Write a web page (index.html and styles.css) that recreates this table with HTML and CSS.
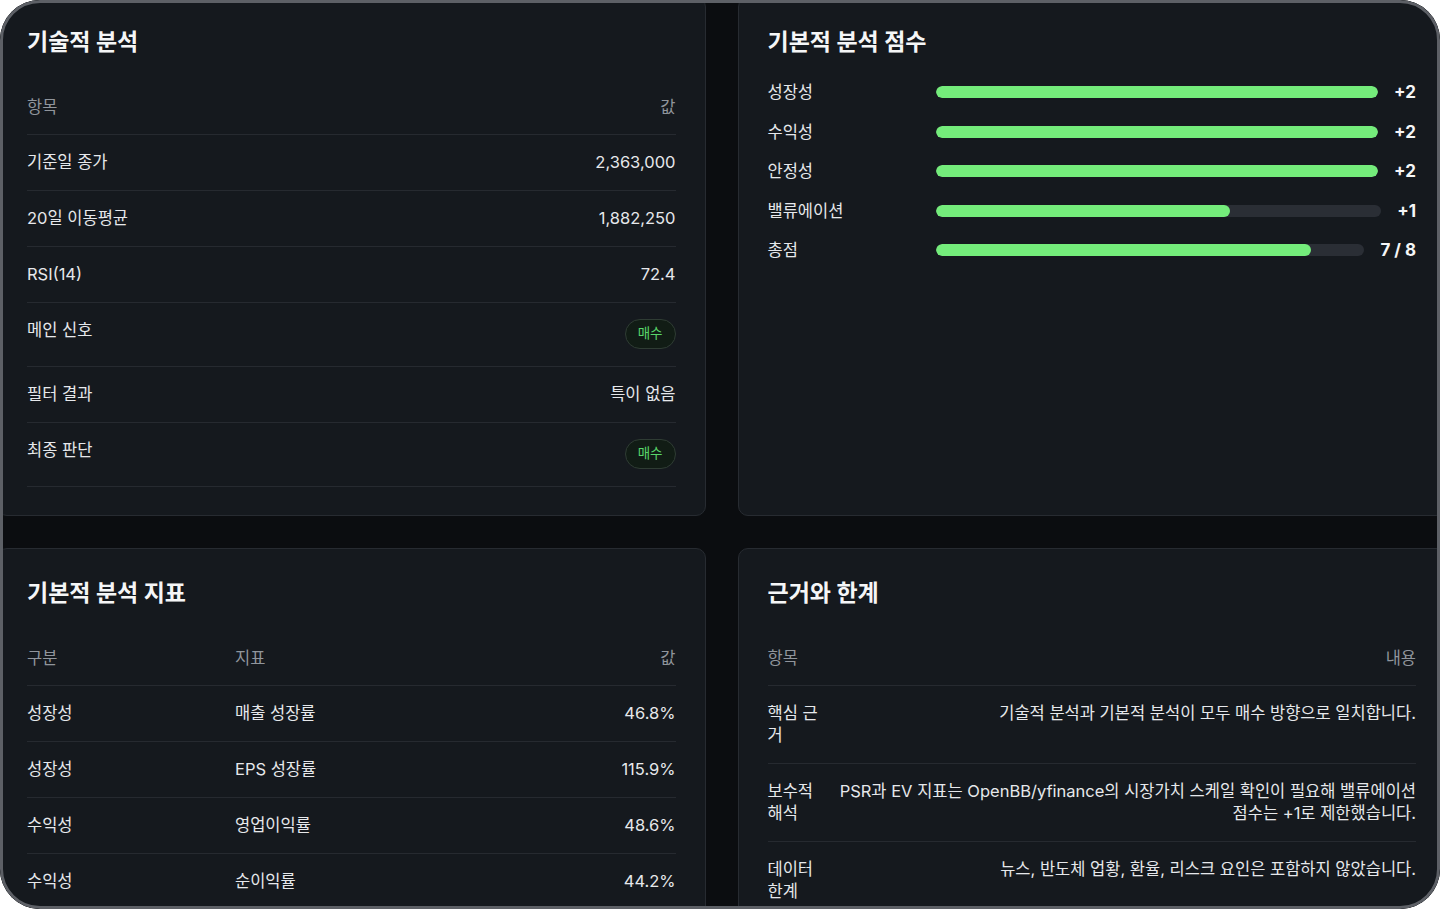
FILE: index.html
```html
<!DOCTYPE html>
<html lang="ko">
<head>
<meta charset="utf-8">
<title>분석 리포트</title>
<link rel="stylesheet" href="styles.css">
</head>
<body>
<div class="frame">
  <main class="board">
    <section class="card">
      <h2 class="card-title">기술적 분석</h2>
      <div class="table kv">
        <div class="row head"><span>항목</span><span class="num">값</span></div>
        <div class="row"><span>기준일 종가</span><span class="num">2,363,000</span></div>
        <div class="row"><span>20일 이동평균</span><span class="num">1,882,250</span></div>
        <div class="row"><span>RSI(14)</span><span class="num">72.4</span></div>
        <div class="row"><span>메인 신호</span><span class="badge">매수</span></div>
        <div class="row"><span>필터 결과</span><span class="num">특이 없음</span></div>
        <div class="row"><span>최종 판단</span><span class="badge">매수</span></div>
      </div>
    </section>

    <section class="card">
      <h2 class="card-title">기본적 분석 점수</h2>
      <div class="scores">
        <div class="score"><span class="score-label">성장성</span><div class="track"><div class="fill" style="width:100%"></div></div><span class="score-val">+2</span></div>
        <div class="score"><span class="score-label">수익성</span><div class="track"><div class="fill" style="width:100%"></div></div><span class="score-val">+2</span></div>
        <div class="score"><span class="score-label">안정성</span><div class="track"><div class="fill" style="width:100%"></div></div><span class="score-val">+2</span></div>
        <div class="score"><span class="score-label">밸류에이션</span><div class="track"><div class="fill" style="width:66%"></div></div><span class="score-val">+1</span></div>
        <div class="score"><span class="score-label">총점</span><div class="track"><div class="fill" style="width:87.5%"></div></div><span class="score-val">7 / 8</span></div>
      </div>
    </section>

    <section class="card">
      <h2 class="card-title">기본적 분석 지표</h2>
      <div class="table metrics">
        <div class="row head"><span>구분</span><span>지표</span><span class="num">값</span></div>
        <div class="row"><span>성장성</span><span>매출 성장률</span><span class="num">46.8%</span></div>
        <div class="row"><span>성장성</span><span>EPS 성장률</span><span class="num">115.9%</span></div>
        <div class="row"><span>수익성</span><span>영업이익률</span><span class="num">48.6%</span></div>
        <div class="row"><span>수익성</span><span>순이익률</span><span class="num">44.2%</span></div>
      </div>
    </section>

    <section class="card">
      <h2 class="card-title">근거와 한계</h2>
      <div class="table notes">
        <div class="row head"><span>항목</span><span class="num">내용</span></div>
        <div class="row"><span>핵심 근거</span><span class="num">기술적 분석과 기본적 분석이 모두 매수 방향으로 일치합니다.</span></div>
        <div class="row"><span>보수적 해석</span><span class="num">PSR과 EV 지표는 OpenBB/yfinance의 시장가치 스케일 확인이 필요해 밸류에이션 점수는 +1로 제한했습니다.</span></div>
        <div class="row"><span>데이터 한계</span><span class="num">뉴스, 반도체 업황, 환율, 리스크 요인은 포함하지 않았습니다.</span></div>
      </div>
    </section>
  </main>
</div>
</body>
</html>
```

FILE: styles.css
```css
* { box-sizing: border-box; }

html, body {
  margin: 0;
  padding: 0;
  background: #ffffff;
}

body {
  font-family: "Inter", "Noto Sans CJK KR", sans-serif;
  color: #e6e8eb;
  font-size: 16.5px;
  line-height: 22px;
}

.frame {
  position: relative;
  width: 1440px;
  height: 909px;
  border-radius: 40px;
  overflow: hidden;
  background: #0b0d10;
}

.frame::after {
  content: "";
  position: absolute;
  inset: 0;
  border: 3px solid #5d6066;
  border-radius: 40px;
  pointer-events: none;
}

.board {
  display: grid;
  grid-template-columns: 1fr 1fr;
  grid-template-rows: 519px auto;
  column-gap: 32px;
  row-gap: 32px;
  width: 1449px;
  margin: -3px 0 0 -3px;
}

.card {
  background: #15191e;
  border: 1px solid #272b31;
  border-radius: 10px;
  padding: 28px 29px 29px;
}

.card-title {
  margin: 0;
  font-size: 23px;
  line-height: 32px;
  font-weight: 700;
  color: #f5f6f7;
}

.table {
  margin-top: 21px;
}

.row {
  display: grid;
  align-items: start;
  padding: 16px 0 17px;
  border-bottom: 1px solid #262a30;
}

.row.head {
  color: #90959c;
  padding: 17px 0 16px;
}

.kv .row {
  grid-template-columns: 1fr auto;
}

.metrics .row {
  grid-template-columns: 208px 1fr auto;
}

.metrics .row:last-child {
  border-bottom: none;
}

.notes .row {
  grid-template-columns: 56px 1fr;
  column-gap: 12px;
}

.num {
  text-align: right;
}

.badge {
  display: inline-flex;
  align-items: center;
  justify-content: center;
  height: 30px;
  padding: 0 12px;
  border: 1px solid #2f3c34;
  border-radius: 15px;
  background: #111c15;
  color: #58d66a;
  font-size: 13.5px;
  line-height: 1;
}

.scores {
  margin-top: 23px;
  display: flex;
  flex-direction: column;
  gap: 17.5px;
}

.score {
  display: grid;
  grid-template-columns: 152px 1fr auto;
  column-gap: 16px;
  align-items: center;
  height: 22px;
}

.track {
  height: 12px;
  border-radius: 6px;
  background: #2a2e35;
  overflow: hidden;
}

.fill {
  height: 100%;
  border-radius: 6px;
  background: #74ec7b;
}

.score-val {
  font-size: 17px;
  font-weight: 700;
  color: #f5f6f7;
  text-align: right;
}
```
